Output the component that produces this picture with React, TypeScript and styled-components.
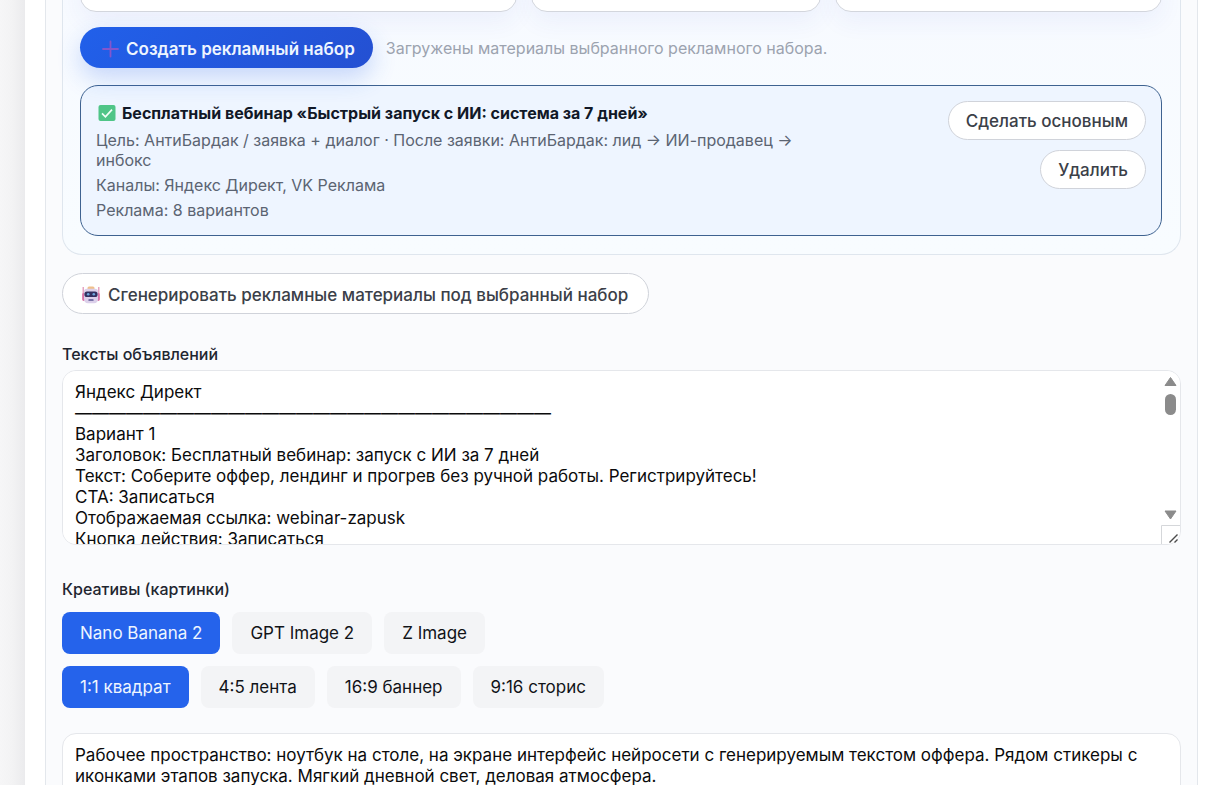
import React, { useState } from "react";
import styled, { createGlobalStyle, css } from "styled-components";

const GlobalStyle = createGlobalStyle`
  *, *::before, *::after { box-sizing: border-box; }
  body {
    margin: 0;
    font-family: Inter, "Liberation Sans", sans-serif;
    font-size: 16px;
    color: #111827;
    background: #f5f6f7;
  }
  button, input, textarea { font: inherit; color: inherit; }
`;

const Page = styled.div`
  display: flex;
  height: 100vh;
  overflow: hidden;
  padding-left: 25px;
  background: linear-gradient(90deg, #f6f6f7 0, #f3f3f4 12px, #ebebed 25px);
`;

const Sheet = styled.main`
  flex: 1;
  min-width: 0;
  padding: 0 14px 0 20px;
  background: #fff;
`;

const Panel = styled.section`
  min-height: 100%;
  padding: 0 16px;
  border: solid #e3e7ec;
  border-width: 0 1px;
  background: #fafbfd;
`;

const SetCard = styled.section`
  padding: 0 18px 18px 17px;
  border: 1px solid #dfe6ee;
  border-top: 0;
  border-radius: 0 0 20px 20px;
  background: linear-gradient(180deg, #f7faff, #f8fcff);
`;

const Fields = styled.div`
  display: grid;
  grid-template-columns: 437fr 290fr 327fr;
  gap: 14px;
  margin-top: -32px;
`;

const Field = styled.input`
  width: 100%;
  min-width: 0;
  height: 44px;
  padding: 0 16px;
  border: 1px solid #d3d6dd;
  border-radius: 16px;
  background: #fff;
  box-shadow: 0 10px 24px rgba(49, 70, 200, 0.06);
`;

const CreateRow = styled.div`
  display: flex;
  align-items: center;
  gap: 13px;
  margin: 15px 0 17px;
`;

const PrimaryButton = styled.button`
  display: flex;
  align-items: center;
  gap: 6px;
  height: 41px;
  padding: 2px 18px 0 20px;
  border: 0;
  border-radius: 21px;
  background: linear-gradient(135deg, #2160ea, #2450d2);
  box-shadow: 0 10px 24px rgba(37, 99, 235, 0.24);
  color: #eef5ff;
  font-weight: 600;
  font-size: 17px;
  white-space: nowrap;
`;

const Hint = styled.span`
  color: #9ca3af;
`;

const Item = styled.article`
  display: flex;
  justify-content: space-between;
  gap: 16px;
  padding: 15px;
  border: 1px solid #3e6290;
  border-radius: 18px;
  background: #eef5ff;
`;

const ItemText = styled.div`
  display: flex;
  flex: 1;
  flex-direction: column;
  gap: 5px;
  min-width: 0;
`;

const ItemTitle = styled.h3`
  display: flex;
  align-items: center;
  gap: 6px;
  margin: 0;
  padding-left: 2px;
  font-size: 16px;
  font-weight: 700;
  line-height: 24px;
`;

const ItemLine = styled.p`
  margin: 0;
  color: #5b6472;
  line-height: 20px;
`;

const ItemActions = styled.div`
  display: flex;
  flex: 0 0 320px;
  flex-direction: column;
  align-items: flex-end;
  gap: 10px;
`;

const PillButton = styled.button<{ $large?: boolean }>`
  display: flex;
  align-items: center;
  gap: 7px;
  height: ${(p) => (p.$large ? 41 : 39)}px;
  padding: ${(p) => (p.$large ? "2px 20px 0 18px" : "0 17px")};
  border: 1px solid #d0d3da;
  border-radius: 21px;
  background: #fff;
  color: #3b4048;
  font-size: 17px;
  font-weight: 500;
  white-space: nowrap;
`;

const Generate = styled.div`
  margin: 18px 0 28px;
`;

const Label = styled.label`
  display: block;
  margin-bottom: 4px;
  color: #1f2630;
  font-weight: 500;
  line-height: 24px;
`;

const TextBox = styled.div`
  position: relative;
  margin-bottom: 32px;
`;

const areaStyle = css`
  display: block;
  width: 100%;
  border: 1px solid #e5e7eb;
  border-radius: 14px;
  background: #fff;
  color: #0b0b0c;
  font-size: 17px;
  line-height: 21px;
  resize: none;
  outline: none;
`;

const AdTexts = styled.textarea`
  ${areaStyle}
  height: 175px;
  padding: 11px 30px 11px 12px;
  scrollbar-width: none;
  white-space: pre-wrap;
`;

const Prompt = styled.textarea`
  ${areaStyle}
  height: 110px;
  margin-top: 25px;
  padding: 11px 12px;
  scrollbar-width: none;
`;

const ScrollBar = styled.svg`
  position: absolute;
  top: 1px;
  right: 0;
`;

const Group = styled.fieldset`
  display: flex;
  flex-direction: column;
  gap: 12px;
  min-width: 0;
  margin: 0;
  padding: 0;
  border: 0;
`;

const Legend = styled.legend`
  padding: 0;
  margin-bottom: 11px;
  color: #1f2630;
  font-weight: 500;
  line-height: 24px;
`;

const Chips = styled.div`
  display: flex;
  gap: 12px;
`;

const Chip = styled.button<{ $active: boolean }>`
  height: 42px;
  padding: 0 18px;
  border: 0;
  border-radius: 8px;
  background: ${(p) => (p.$active ? "#2563eb" : "#f3f4f6")};
  color: ${(p) => (p.$active ? "#eef5ff" : "#111318")};
  font-size: 17px;
  font-weight: 400;
  white-space: nowrap;
`;

const PlusIcon = () => (
  <svg width="20" height="20" viewBox="0 0 20 20" aria-hidden="true">
    <path d="M10.5 2.5v15M3 10h15" stroke="#8456cc" strokeWidth="1.8" strokeLinecap="round" />
  </svg>
);

const CheckIcon = () => (
  <svg width="18" height="18" viewBox="0 0 18 18" aria-hidden="true">
    <rect x="0.5" y="1" width="17" height="16" rx="2" fill="#4fc587" />
    <path d="M4 9.4l3.4 3.4L14 5.6" fill="none" stroke="#f2fff7" strokeWidth="1.7" />
  </svg>
);

const RobotIcon = () => (
  <svg width="20" height="20" viewBox="0 0 20 20" aria-hidden="true">
    <path d="M2.2 2v12M17.8 2v12" stroke="#e08fb4" strokeWidth="1.2" />
    <rect x="6.5" y="1.5" width="7" height="4" rx="1.5" fill="#f0c08c" />
    <rect x="1.2" y="8" width="3" height="8" rx="1.4" fill="#d873a6" />
    <rect x="15.8" y="8" width="3" height="8" rx="1.4" fill="#d873a6" />
    <path d="M3 6.6Q3 3.8 6 3.8h8q3 0 3 2.8v7.2q0 4.4-4 4.4H7q-4 0-4-4.4z" fill="#dcd0ea" />
    <rect x="3.4" y="6.4" width="13.2" height="5.6" rx="2.6" fill="#33305f" />
    <circle cx="7.2" cy="9.2" r="1.3" fill="#6fa6dc" />
    <circle cx="12.8" cy="9.2" r="1.3" fill="#6fa6dc" />
    <rect x="7.4" y="14.2" width="5.2" height="1.6" rx="0.6" fill="#5a5593" />
  </svg>
);

const AD_TEXT = [
  "Яндекс Директ",
  "—".repeat(28),
  "Вариант 1",
  "Заголовок: Бесплатный вебинар: запуск с ИИ за 7 дней",
  "Текст: Соберите оффер, лендинг и прогрев без ручной работы. Регистрируйтесь!",
  "CTA: Записаться",
  "Отображаемая ссылка: webinar-zapusk",
  "Кнопка действия: Записаться",
].join("\n");

const PROMPT_TEXT =
  "Рабочее пространство: ноутбук на столе, на экране интерфейс нейросети с генерируемым текстом оффера. Рядом стикеры с иконками этапов запуска. Мягкий дневной свет, деловая атмосфера.";

const MODELS = ["Nano Banana 2", "GPT Image 2", "Z Image"];
const FORMATS = ["1:1 квадрат", "4:5 лента", "16:9 баннер", "9:16 сторис"];

export default function App() {
  const [model, setModel] = useState(MODELS[0]);
  const [format, setFormat] = useState(FORMATS[0]);

  return (
    <>
      <GlobalStyle />
      <Page>
        <Sheet>
          <Panel>
            <SetCard>
              <Fields>
                <Field aria-label="Название набора" />
                <Field aria-label="Цель" />
                <Field aria-label="Каналы" />
              </Fields>
              <CreateRow>
                <PrimaryButton type="button">
                  <PlusIcon />
                  Создать рекламный набор
                </PrimaryButton>
                <Hint>Загружены материалы выбранного рекламного набора.</Hint>
              </CreateRow>
              <Item>
                <ItemText>
                  <ItemTitle>
                    <CheckIcon />
                    Бесплатный вебинар «Быстрый запуск с ИИ: система за 7 дней»
                  </ItemTitle>
                  <ItemLine>
                    Цель: АнтиБардак / заявка + диалог · После заявки: АнтиБардак: лид → ИИ-продавец → инбокс
                  </ItemLine>
                  <ItemLine>Каналы: Яндекс Директ, VK Реклама</ItemLine>
                  <ItemLine>Реклама: 8 вариантов</ItemLine>
                </ItemText>
                <ItemActions>
                  <PillButton type="button">Сделать основным</PillButton>
                  <PillButton type="button">Удалить</PillButton>
                </ItemActions>
              </Item>
            </SetCard>

            <Generate>
              <PillButton type="button" $large>
                <RobotIcon />
                Сгенерировать рекламные материалы под выбранный набор
              </PillButton>
            </Generate>

            <Label htmlFor="ad-texts">Тексты объявлений</Label>
            <TextBox>
              <AdTexts id="ad-texts" defaultValue={AD_TEXT} />
              <ScrollBar width="20" height="173" viewBox="0 0 20 173" aria-hidden="true">
                <path d="M9.5 6.5l5.5 8h-11z" fill="#8b8b8b" stroke="#8b8b8b" strokeLinejoin="round" />
                <rect x="4" y="23" width="11" height="21" rx="5.5" fill="#8b8b8b" />
                <path d="M9.5 148l5.5-8h-11z" fill="#8b8b8b" stroke="#8b8b8b" strokeLinejoin="round" />
                <path d="M0.5 173v-18.5H19" fill="none" stroke="#d5d7da" />
                <path d="M8.5 171.5l8-8M13.5 171.5l3-3" stroke="#4b4b4b" strokeWidth="1.4" />
              </ScrollBar>
            </TextBox>

            <Group>
              <Legend>Креативы (картинки)</Legend>
              <Chips>
                {MODELS.map((name) => (
                  <Chip key={name} type="button" $active={name === model} onClick={() => setModel(name)}>
                    {name}
                  </Chip>
                ))}
              </Chips>
              <Chips>
                {FORMATS.map((name) => (
                  <Chip key={name} type="button" $active={name === format} onClick={() => setFormat(name)}>
                    {name}
                  </Chip>
                ))}
              </Chips>
            </Group>
            <Prompt aria-label="Описание картинки" defaultValue={PROMPT_TEXT} />
          </Panel>
        </Sheet>
      </Page>
    </>
  );
}
